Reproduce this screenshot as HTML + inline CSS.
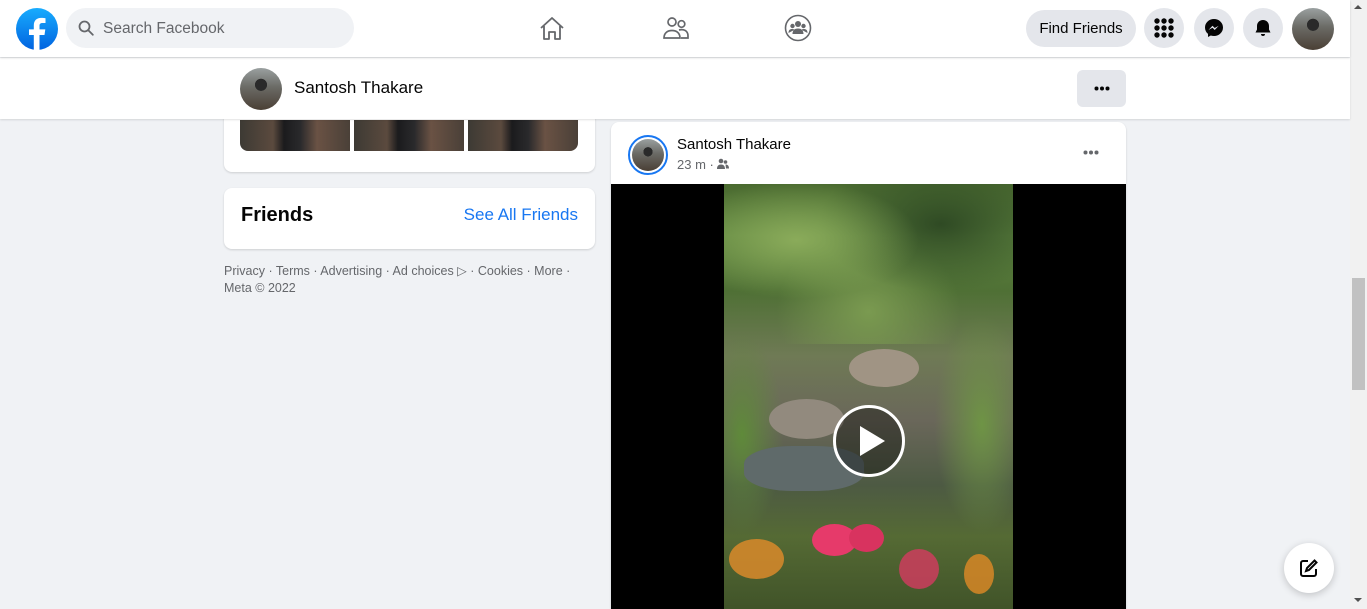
<!DOCTYPE html>
<html><head><meta charset="utf-8"><style>
*{box-sizing:border-box;margin:0;padding:0}
body{width:1367px;height:609px;overflow:hidden;background:#f0f2f5;font-family:"Liberation Sans",sans-serif;position:relative}
.abs{position:absolute}
.av{border-radius:50%;background:radial-gradient(circle at 50% 40%,#2a2a2a 0 18%,transparent 19%),linear-gradient(180deg,#9aa0a0 0%,#6b6b66 45%,#4a3f35 100%)}
.circbtn{position:absolute;top:8px;width:40px;height:40px;border-radius:50%;background:#e4e6eb;display:flex;align-items:center;justify-content:center}
.photo{position:absolute;top:120px;width:110px;height:31px;background:linear-gradient(90deg,#3d3a34 0%,#5b4a3e 30%,#1b1b1d 40%,#2a2a2c 55%,#6a5244 70%,#4a4038 100%)}
</style></head><body>
<div class="abs" style="left:0;top:0;width:1350px;height:57px;background:#fff;box-shadow:0 1px 2px rgba(0,0,0,.15);z-index:3">
 <svg class="abs" style="left:16px;top:8px" width="42" height="42" viewBox="0 0 42 42"><defs><linearGradient id="g" x1="0" y1="0" x2="0" y2="1"><stop offset="0" stop-color="#18acfe"/><stop offset="1" stop-color="#0163e0"/></linearGradient></defs><circle cx="21" cy="21" r="21" fill="url(#g)"/><path d="M23.5 42V27h5l.8-5.6h-5.8v-3.6c0-1.7.6-2.8 3-2.8h3V10.2c-.6-.1-2.4-.3-4.4-.3-4.4 0-7.3 2.6-7.3 7.5v4H13v5.6h4.8V42z" fill="#fff"/></svg>
 <div class="abs" style="left:66px;top:8px;width:288px;height:40px;border-radius:20px;background:#f0f2f5"></div>
 <svg class="abs" style="left:78px;top:20px" width="16" height="16" viewBox="0 0 16 16"><circle cx="6.5" cy="6.5" r="5" fill="none" stroke="#65676b" stroke-width="1.8"/><path d="M10.3 10.3l4.5 4.5" stroke="#65676b" stroke-width="1.8" stroke-linecap="round"/></svg>
 <div class="abs" style="left:103px;top:20px;font-size:15.5px;color:#65676b">Search Facebook</div>
 <svg class="abs" style="left:538px;top:15px" width="28" height="28" viewBox="0 0 28 28"><path d="M3 13L14 3l11 10M6 11v13h5v-7h6v7h5V11" fill="none" stroke="#65676b" stroke-width="1.8" stroke-linejoin="round"/></svg>
 <svg class="abs" style="left:662px;top:15px" width="28" height="28" viewBox="0 0 28 28" fill="none" stroke="#65676b" stroke-width="1.7"><circle cx="10" cy="7" r="4"/><circle cx="19.5" cy="9" r="3.3"/><path d="M2 23c0-5 3.5-7.5 8-7.5s8 2.5 8 7.5z"/><path d="M17 15c4-1 9 0 9 6v2h-7"/></svg>
 <svg class="abs" style="left:784px;top:14px" width="28" height="28" viewBox="0 0 28 28"><circle cx="14" cy="14" r="12.5" fill="none" stroke="#65676b" stroke-width="1.6"/><circle cx="14" cy="10" r="3" fill="#65676b"/><circle cx="8.5" cy="12" r="2.2" fill="#65676b"/><circle cx="19.5" cy="12" r="2.2" fill="#65676b"/><path d="M8.5 20c0-4 2.5-5.5 5.5-5.5s5.5 1.5 5.5 5.5zM4.5 19c0-3 1.5-4 3.5-4s2.5.7 2.5.7M23.5 19c0-3-1.5-4-3.5-4s-2.5.7-2.5.7" fill="#65676b"/></svg>
 <div class="abs" style="left:1026px;top:10px;width:110px;height:37px;border-radius:19px;background:#e4e6eb;font-size:15px;color:#050505;text-align:center;line-height:37px">Find Friends</div>
 <div class="circbtn" style="left:1144px"><svg width="22" height="22" viewBox="0 0 22 22" fill="#050505"><circle cx="4" cy="4" r="2.7"/><circle cx="11" cy="4" r="2.7"/><circle cx="18" cy="4" r="2.7"/><circle cx="4" cy="11" r="2.7"/><circle cx="11" cy="11" r="2.7"/><circle cx="18" cy="11" r="2.7"/><circle cx="4" cy="18" r="2.7"/><circle cx="11" cy="18" r="2.7"/><circle cx="18" cy="18" r="2.7"/></svg></div>
 <div class="circbtn" style="left:1194px"><svg width="20" height="20" viewBox="0 0 20 20"><path d="M10 1C5 1 1 4.7 1 9.5c0 2.6 1.1 4.8 3 6.4V19l2.8-1.5c1 .3 2.1.5 3.2.5 5 0 9-3.7 9-8.5S15 1 10 1z" fill="#050505"/><path d="M4.5 12L8.5 7.8l2.2 2.2 4-2.2-4 4.2-2.2-2.2z" fill="#e4e6eb"/></svg></div>
 <div class="circbtn" style="left:1243px"><svg width="20" height="20" viewBox="0 0 20 20" fill="#050505"><path d="M10 2c-3.5 0-6 2.5-6 6v3.5L2.5 14.5h15L16 11.5V8c0-3.5-2.5-6-6-6zM8 16h4a2 2 0 0 1-4 0z"/></svg></div>
 <div class="abs av" style="left:1292px;top:8px;width:42px;height:42px"></div>
</div>
<div class="abs" style="left:0;top:58px;width:1350px;height:61px;background:#fff;box-shadow:0 1px 2px rgba(0,0,0,.12);z-index:2">
 <div class="abs av" style="left:240px;top:10px;width:42px;height:42px"></div>
 <div class="abs" style="left:294px;top:20px;font-size:17px;color:#050505">Santosh Thakare</div>
 <div class="abs" style="left:1077px;top:12px;width:49px;height:37px;border-radius:6px;background:#e4e6eb"><svg class="abs" style="left:17px;top:16px" width="16" height="5" viewBox="0 0 16 5" fill="#050505"><circle cx="2.5" cy="2.5" r="2"/><circle cx="8" cy="2.5" r="2"/><circle cx="13.5" cy="2.5" r="2"/></svg></div>
</div>
<div class="abs" style="left:224px;top:100px;width:371px;height:72px;background:#fff;border-radius:8px;box-shadow:0 1px 2px rgba(0,0,0,.15)"></div>
<div class="photo" style="left:240px;border-bottom-left-radius:8px"></div>
<div class="photo" style="left:354px"></div>
<div class="photo" style="left:468px;border-bottom-right-radius:8px"></div>
<div class="abs" style="left:224px;top:188px;width:371px;height:61px;background:#fff;border-radius:8px;box-shadow:0 1px 2px rgba(0,0,0,.15)">
 <div class="abs" style="left:17px;top:16px;font-size:20px;font-weight:bold;color:#050505">Friends</div>
 <div class="abs" style="right:17px;top:17px;font-size:17px;color:#1877f2">See All Friends</div>
</div>
<div class="abs" style="left:224px;top:263px;width:371px;font-size:12.5px;line-height:17px;color:#65676b">Privacy · Terms · Advertising · Ad choices ▷ · Cookies · More ·<br>Meta © 2022</div>
<div class="abs" style="left:611px;top:122px;width:515px;height:487px;background:#fff;border-radius:8px 8px 0 0;overflow:hidden;box-shadow:0 1px 2px rgba(0,0,0,.15)">
 <div class="abs" style="left:17px;top:13px;width:40px;height:40px;border-radius:50%;border:2px solid #1877f2;padding:2px;background:#fff"><div class="av" style="width:32px;height:32px"></div></div>
 <div class="abs" style="left:66px;top:14px;font-size:15px;color:#050505">Santosh Thakare</div>
 <div class="abs" style="left:66px;top:35px;font-size:13px;color:#65676b">23 m · <svg width="12" height="12" viewBox="0 0 12 12" fill="#65676b" style="vertical-align:-1px"><circle cx="4" cy="3" r="2.3"/><circle cx="8.5" cy="4" r="1.8"/><path d="M0 11c0-3 1.5-4.5 4-4.5S8 8 8 11zM8.5 6.5c2 0 3.5 1 3.5 4H9z"/></svg></div>
 <svg class="abs" style="left:472px;top:28px" width="16" height="5" viewBox="0 0 16 5" fill="#65676b"><circle cx="2.5" cy="2.5" r="2"/><circle cx="8" cy="2.5" r="2"/><circle cx="13.5" cy="2.5" r="2"/></svg>
 <div class="abs" style="left:0;top:62px;width:515px;height:430px;background:#000">
  <div class="abs" style="left:113px;top:0;width:289px;height:430px;overflow:hidden;background:linear-gradient(180deg,#4a6a30 0%,#5f8540 12%,#4f7035 25%,#6f7a55 40%,#6a675a 55%,#4d5a43 70%,#556a34 82%,#3f5228 100%)">
   <div class="abs" style="left:0;top:0;width:289px;height:160px;background:radial-gradient(ellipse at 25% 35%,#8aab5a 0,transparent 40%),radial-gradient(ellipse at 75% 25%,#2f4a24 0,transparent 40%),radial-gradient(ellipse at 50% 80%,#7a9a50 0,transparent 45%)"></div>
   <div class="abs" style="left:0;top:150px;width:60px;height:200px;background:radial-gradient(ellipse at 30% 50%,#5f8a3a 0,transparent 70%)"></div>
   <div class="abs" style="left:210px;top:130px;width:80px;height:220px;background:radial-gradient(ellipse at 60% 50%,#6e9445 0,transparent 70%)"></div>
   <div class="abs" style="left:125px;top:165px;width:70px;height:38px;border-radius:50%;background:#a09484"></div>
   <div class="abs" style="left:45px;top:215px;width:75px;height:40px;border-radius:50%;background:#928a7e"></div>
   <div class="abs" style="left:20px;top:262px;width:120px;height:45px;background:#5f6a6a;border-radius:40%"></div>
   <div class="abs" style="left:88px;top:340px;width:45px;height:32px;border-radius:50%;background:#e63a6a"></div>
   <div class="abs" style="left:125px;top:340px;width:35px;height:28px;border-radius:50%;background:#d8335f"></div>
   <div class="abs" style="left:5px;top:355px;width:55px;height:40px;border-radius:50%;background:#d9892a;opacity:.85"></div>
   <div class="abs" style="left:175px;top:365px;width:40px;height:40px;border-radius:50%;background:#d43b60;opacity:.8"></div>
   <div class="abs" style="left:240px;top:370px;width:30px;height:40px;border-radius:50%;background:#e08a25;opacity:.8"></div>
   <div class="abs" style="left:109px;top:221px;width:72px;height:72px;border-radius:50%;border:3px solid #fff;background:rgba(0,0,0,.35)"></div>
   <svg class="abs" style="left:133px;top:240px" width="30" height="34" viewBox="0 0 30 34"><path d="M3 2l25 15L3 32z" fill="#fff"/></svg>
  </div>
 </div>
</div>
<div class="abs" style="left:1284px;top:543px;width:50px;height:50px;border-radius:50%;background:#fff;box-shadow:0 2px 8px rgba(0,0,0,.2);display:flex;align-items:center;justify-content:center"><svg width="20" height="20" viewBox="0 0 20 20" fill="none" stroke="#050505" stroke-width="2"><path d="M9 3H4a2 2 0 0 0-2 2v11a2 2 0 0 0 2 2h11a2 2 0 0 0 2-2v-5"/><path d="M15.5 2.5l2 2L10 12l-3 1 1-3z"/></svg></div>
<div class="abs" style="left:1350px;top:0;width:17px;height:609px;background:#f1f1f1"></div>
<div class="abs" style="left:1352px;top:278px;width:13px;height:112px;background:#c1c1c1"></div>
<div class="abs" style="left:1354px;top:5px;width:0;height:0;border-left:4px solid transparent;border-right:4px solid transparent;border-bottom:4px solid #505050"></div>
<div class="abs" style="left:1354px;top:598px;width:0;height:0;border-left:4px solid transparent;border-right:4px solid transparent;border-top:4px solid #505050"></div>
</body></html>
